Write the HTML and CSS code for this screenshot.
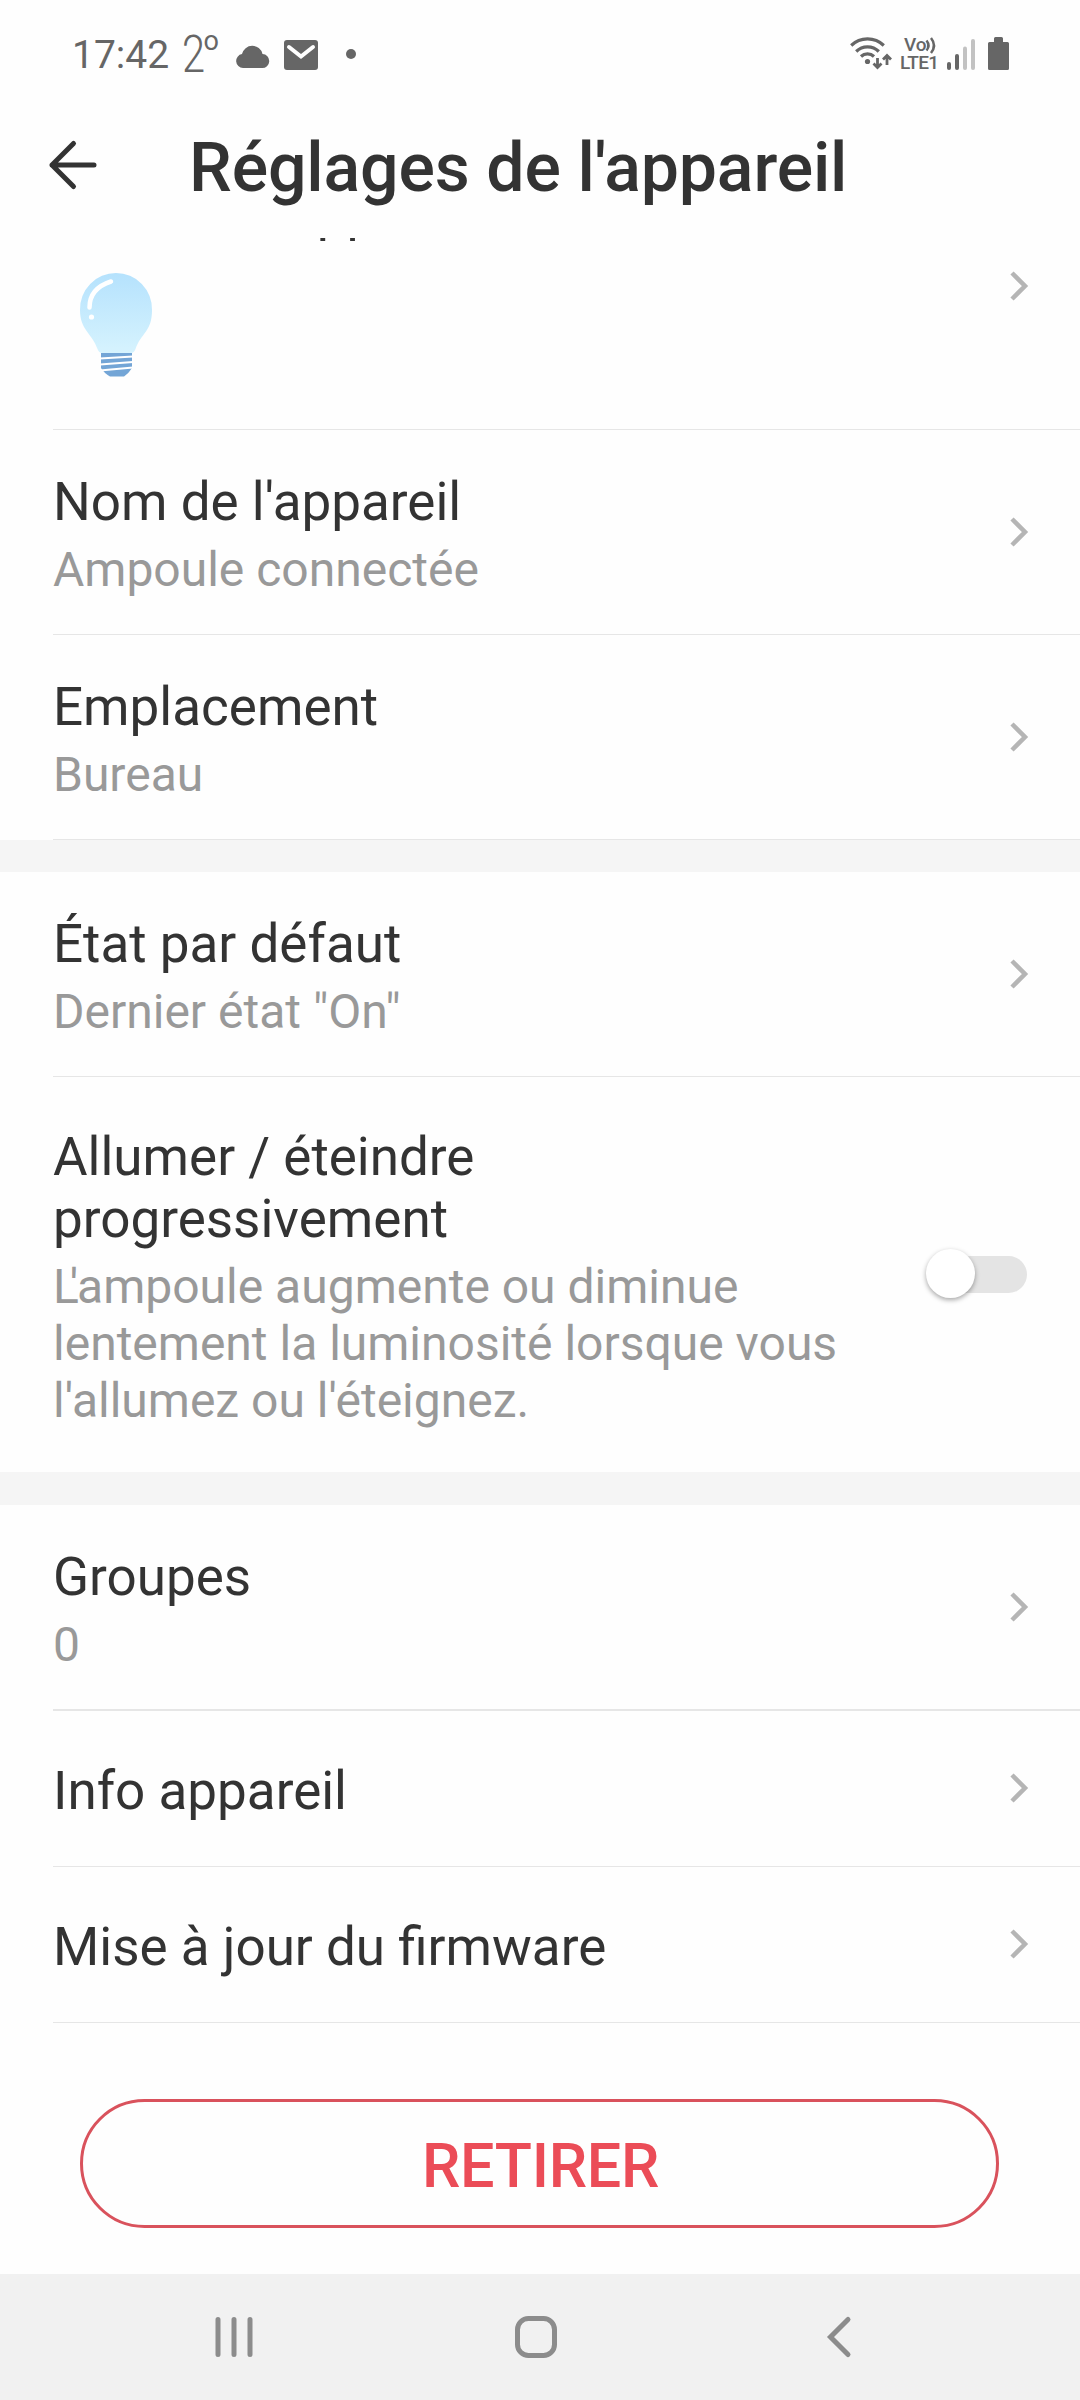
FILE: index.html
```html
<!DOCTYPE html>
<html lang="fr">
<head>
    <meta charset="UTF-8">
    <meta name="viewport" content="width=device-width, initial-scale=1.0">
    <title>Réglages de l'appareil</title>
    <link rel="stylesheet" href="styles.css">
</head>
<body>
    <!-- Status bar -->
    <div class="status-bar">
        <span class="time">17:42</span>
        <svg class="weather" width="40" height="42" viewBox="0 0 40 42">
            <text class="temp" transform="translate(0 40) scale(.8 1)">2</text>
            <text class="degree" x="21.500" y="18">o</text>
        </svg>
        <svg class="cloud" width="33" height="22" viewBox="0 0 33 22">
            <path d="M7 22a7 7 0 0 1-1-13.900A10.500 10.500 0 0 1 26.500 8 7 7 0 0 1 26 22z" fill="#666"/>
        </svg>
        <svg class="mail" width="34" height="30" viewBox="0 0 34 30">
            <rect width="34" height="30" rx="3" fill="#666"/>
            <path d="M5 7l12 9.500L29 7" fill="none" stroke="#fff" stroke-width="4" stroke-linecap="round"/>
        </svg>
        <span class="dot"></span>

        <div class="status-right">
            <svg width="42" height="34" viewBox="0 0 42 34">
                <g fill="none" stroke="#666" stroke-width="3.200">
                    <path d="M1.200 9.500a23.500 23.500 0 0 1 32.600 0"/>
                    <path d="M6.200 15.500a16 16 0 0 1 22.600 0"/>
                    <path d="M11 20.500a9.500 9.500 0 0 1 13 0"/>
                    <path d="M27.500 22v9M23.500 27.500l4 4 4-4M37 29v-9M33 23.500l4-4 4 4" stroke-width="2.800"/>
                </g>
                <circle cx="17.500" cy="25.500" r="2.600" fill="#666"/>
            </svg>
            <svg class="volte" width="40" height="36" viewBox="0 0 40 36">
                <text x="3" y="17">Vo</text>
                <path d="M25.500 6.500q4 5 0 10M30 4q6 7.500 0 15" fill="none" stroke="#666" stroke-width="2.500"/>
                <text x="-1" y="35" textLength="39">LTE1</text>
            </svg>
            <svg class="signal" width="28" height="31" viewBox="0 0 28 31">
                <g fill="#666">
                    <rect x="0" y="23" width="4" height="8" rx="2"/>
                    <rect x="8" y="15" width="4" height="16" rx="2"/>
                </g>
                <g fill="#c2c2c2">
                    <rect x="16" y="7.500" width="4" height="23.500" rx="2"/>
                    <rect x="24" y="0" width="4" height="31" rx="2"/>
                </g>
            </svg>
            <svg class="battery" width="21" height="33" viewBox="0 0 21 33">
                <path d="M6 1.500Q6 0 7.500 0h6Q15 0 15 1.500V5h4.500Q21 5 21 6.500v25q0 1.500-1.500 1.500h-18Q0 33 0 31.500v-25Q0 5 1.500 5H6z" fill="#666"/>
            </svg>
        </div>
    </div>

    <!-- Title bar -->
    <header class="app-bar">
        <svg width="48" height="48" viewBox="0 0 48 48">
            <path d="M24.500 2.500L3 24l21.500 21.500M3 24h42" fill="none" stroke="#333" stroke-width="5" stroke-linecap="round" stroke-linejoin="round"/>
        </svg>
        <h1>Réglages de l'appareil</h1>
    </header>

    <main class="settings">
        <div class="row row-icon">
            <div class="text">
                <div class="label">Icône de l'appareil</div>
                <svg class="bulb" width="72" height="104" viewBox="0 0 72 104">
                    <defs>
                        <linearGradient id="glass" x1="0" y1="0" x2="0" y2="1">
                            <stop offset="0" stop-color="#b5e2fd"/>
                            <stop offset="1" stop-color="#d6f3fe"/>
                        </linearGradient>
                    </defs>
                    <path d="M36 0A36 36 0 0 1 72 37C72 59 61 60 55.500 76Q54 80 51 80H22Q19 80 17.500 76C12 60 0 57 0 37A36 36 0 0 1 36 0z" fill="url(#glass)"/>
                    <path d="M31 8.500C17 13 9.500 22 9.500 34.500" fill="none" stroke="#fff" stroke-width="4.500" stroke-linecap="round"/>
                    <circle cx="11.500" cy="44" r="2.600" fill="#fff"/>
                    <path d="M21 80h31v15q-3 5-8 8.500H30Q24 100 21 95z" fill="#73a5d6"/>
                    <path d="M20 85.500l33-2M20 91.500l33-2.500M20 97.500l33-3" stroke="#fff" stroke-width="2"/>
                </svg>
            </div>
            <svg class="chevron" width="18" height="30" viewBox="0 0 18 30"><path d="M2 2l13 13L2 28"/></svg>
        </div>
        <div class="row">
            <div class="text">
                <div class="label">Nom de l'appareil</div>
                <div class="value">Ampoule connectée</div>
            </div>
            <svg class="chevron" width="18" height="30" viewBox="0 0 18 30"><path d="M2 2l13 13L2 28"/></svg>
        </div>
        <div class="row">
            <div class="text">
                <div class="label">Emplacement</div>
                <div class="value">Bureau</div>
            </div>
            <svg class="chevron" width="18" height="30" viewBox="0 0 18 30"><path d="M2 2l13 13L2 28"/></svg>
        </div>

        <div class="separator"></div>

        <div class="row">
            <div class="text">
                <div class="label">État par défaut</div>
                <div class="value">Dernier état "On"</div>
            </div>
            <svg class="chevron" width="18" height="30" viewBox="0 0 18 30"><path d="M2 2l13 13L2 28"/></svg>
        </div>
        <div class="row row-switch">
            <div class="text">
                <div class="label">Allumer / éteindre<br>progressivement</div>
                <div class="value"><span class="kern">L</span>'ampoule augmente ou diminue<br>lentement la luminosité lorsque vous<br>l'allumez ou l'éteignez.</div>
            </div>
            <div class="switch"><div class="knob"></div></div>
        </div>

        <div class="separator"></div>

        <div class="row row-groups">
            <div class="text">
                <div class="label">Groupes</div>
                <div class="value">0</div>
            </div>
            <svg class="chevron" width="18" height="30" viewBox="0 0 18 30"><path d="M2 2l13 13L2 28"/></svg>
        </div>
        <div class="row row-single">
            <div class="text">
                <div class="label">Info appareil</div>
            </div>
            <svg class="chevron" width="18" height="30" viewBox="0 0 18 30"><path d="M2 2l13 13L2 28"/></svg>
        </div>
        <div class="row row-single">
            <div class="text">
                <div class="label">Mise à jour du firmware</div>
            </div>
            <svg class="chevron" width="18" height="30" viewBox="0 0 18 30"><path d="M2 2l13 13L2 28"/></svg>
        </div>

        <button type="button" class="remove">RETIRER</button>
    </main>

    <!-- Android navigation -->
    <nav class="nav-bar">
        <svg width="38" height="42" viewBox="0 0 38 42">
            <path d="M3 3.500v35M19 3.500v35M35 3.500v35"/>
        </svg>
        <svg class="home" width="42" height="42" viewBox="0 0 42 42">
            <rect x="2.500" y="2.500" width="37" height="37" rx="11"/>
        </svg>
        <svg width="24" height="42" viewBox="0 0 24 42">
            <path d="M21 3.500L3.500 21 21 38.500"/>
        </svg>
    </nav>
</body>
</html>
```
FILE: styles.css
```css
* {
    box-sizing: border-box;
}
body {
    margin: 0;
    width: 1080px;
    height: 2400px;
    display: flex;
    flex-direction: column;
    background: #fefefe;
    color: #333;
    font-family: Roboto, sans-serif;
    overflow: hidden;
}
svg {
    display: block;
    flex: none;
    overflow: visible;
}

/* Status bar */
.status-bar {
    height: 104px;
    padding: 0 71px 0 72px;
    display: flex;
    align-items: flex-start;
    color: #666;
}
.time {
    width: 110px;
    padding-top: 32px;
    font-size: 39px;
    line-height: 46px;
}
.weather {
    margin-top: 32px;
    fill: #666;
}
.temp {
    font-size: 52px;
    font-weight: 300;
}
.degree {
    font-size: 27px;
}
.cloud {
    margin: 46px 0 0 14px;
}
.mail {
    margin: 40px 0 0 15px;
}
.dot {
    width: 10px;
    height: 10px;
    margin: 49px 0 0 28px;
    border-radius: 50%;
    background: #666;
}
.status-right {
    display: flex;
    margin: 36px 0 0 auto;
}
.volte {
    margin-left: 9px;
    margin-top: -2px;
    fill: #666;
    font-size: 19px;
    font-weight: 500;
}
.signal {
    margin: 3px 0 0 6px;
}
.battery {
    margin: 1px 0 0 13px;
}

/* Title bar */
.app-bar {
    height: 134px;
    padding: 21px 0 0 49px;
    display: flex;
    align-items: flex-start;
}
.app-bar svg {
    margin-top: 16px;
}
.app-bar h1 {
    margin: 3px 0 0 92px;
    font-size: 68px;
    font-weight: 500;
    line-height: 80px;
    letter-spacing: -0.15px;
    white-space: nowrap;
}

/* Settings list, scrolled a little under the title bar */
.settings {
    flex: 1;
    min-height: 0;
    overflow: hidden;
}
.row {
    height: 205px;
    margin-left: 53px;
    padding: 41px 52px 0 0;
    display: flex;
    justify-content: space-between;
    border-bottom: 1px solid #e6e6e6;
}
.label {
    font-size: 53px;
    line-height: 62px;
    white-space: nowrap;
}
.value {
    margin-top: 8px;
    color: #999;
    font-size: 48px;
    line-height: 57px;
    white-space: nowrap;
}
.kern {
    letter-spacing: -9px;
}
.chevron {
    align-self: center;
    margin-top: -41px;
    fill: none;
    stroke: #b5b5b5;
    stroke-width: 4.5px;
}
.row-icon {
    height: 287px;
    margin-top: -95px;
    padding-top: 38px;
}
.row-icon .chevron {
    margin-top: -38px;
}
.bulb {
    margin: 30px 0 0 27px;
}
.row-switch {
    height: 395px;
    padding-top: 49px;
    border-bottom: none;
}
.row-switch + .separator {
    height: 33px;
}
.row-groups {
    height: 206px;
    border-bottom-width: 2px;
}
.row-single {
    height: 156px;
    padding-top: 49px;
}
.row-single .chevron {
    margin-top: -50px;
}
.separator {
    height: 32px;
    background: #f5f5f5;
}
.switch {
    align-self: center;
    width: 94px;
    height: 37px;
    margin-top: -49px;
    margin-right: 1px;
    display: flex;
    align-items: center;
    border-radius: 19px;
    background: #e4e4e4;
}
.knob {
    width: 49px;
    height: 49px;
    margin: -2px 0 0 -7px;
    border-radius: 50%;
    background: #fff;
    box-shadow: 0 2px 5px rgba(0, 0, 0, 0.35);
}
.remove {
    display: block;
    width: 919px;
    height: 129px;
    margin: 76px 0 0 80px;
    padding: 4px 0 0 2px;
    border: 3px solid #d9525c;
    border-radius: 65px;
    background: transparent;
    color: #eb4c57;
    font-family: inherit;
    font-size: 61px;
    font-weight: 500;
    line-height: 72px;
    letter-spacing: -0.3px;
}

/* Navigation bar */
.nav-bar {
    height: 126px;
    padding: 0 229px 0 215px;
    display: flex;
    justify-content: space-between;
    align-items: center;
    background: #f1f1f1;
}
.nav-bar svg {
    fill: none;
    stroke: #8c8c8c;
    stroke-width: 5px;
    stroke-linecap: round;
}
.nav-bar .home {
    margin-right: 8px;
}
```
